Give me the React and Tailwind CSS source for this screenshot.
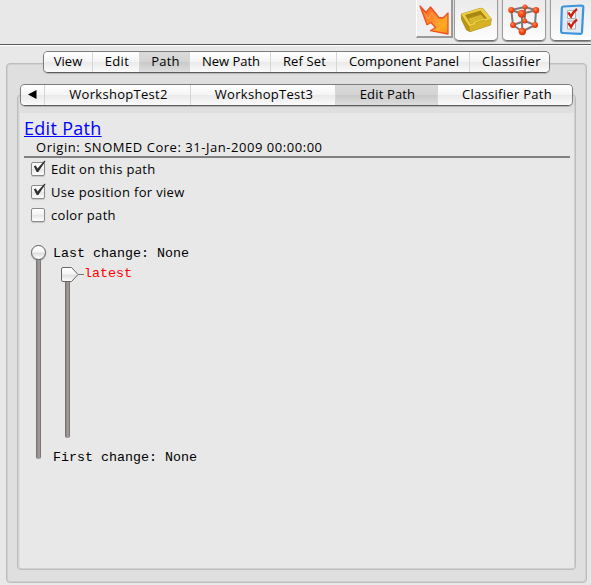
const UI = "font-['Open_Sans','Noto_Sans',sans-serif]";
const MONO = "font-['Liberation_Mono',monospace]";

function Segment({ className = '', text, active, last }) {
  return (
    <div
      className={`flex h-full items-center justify-center pb-[2px] whitespace-nowrap ${last ? '' : 'border-r border-[#d6d6d6]'} ${
        active
          ? 'bg-[linear-gradient(#dadada_0%,#d4d4d4_48%,#c9c9c9_52%,#dedede_100%)]'
          : 'bg-[linear-gradient(#ffffff_0%,#f5f5f5_48%,#eaeaea_52%,#fbfbfb_100%)]'
      } ${className}`}
    >
      {text}
    </div>
  );
}

function SegmentBar({ className, children }) {
  return (
    <div
      className={`relative flex h-[22px] overflow-hidden rounded-[5px] border border-[#7c7c7c] border-b-[#5c5c5c] text-[13px] leading-[18px] shadow-[0_1px_1px_#b4b4b4] ${className}`}
    >
      {children}
    </div>
  );
}

function Check({ label, checked }) {
  return (
    <label className="flex h-[23px] items-center">
      <span className="relative mr-[6px] -mt-[1px] h-[14px] w-[14px] rounded-[2px] border border-[#8a8a8a] bg-[linear-gradient(#fff,#f2f2f2_48%,#e6e6e6_52%,#fff)] shadow-[0_1px_1px_#c4c4c4]">
        {checked && (
          <svg className="absolute -top-[3px] -left-px h-[16px] w-[16px]" viewBox="0 0 16 16">
            <path d="M2.800 6.200 L4.800 5.500 L6.500 8.500 L13.300 .7 L14.600 .9 L7.300 12 L5.700 12 Z" fill="#303030" />
          </svg>
        )}
      </span>
      <span className="text-[13px] tracking-[0.33px] whitespace-nowrap">{label}</span>
    </label>
  );
}

function ArrowIcon() {
  return (
    <svg className="h-[37px] w-[36px] shrink-0" viewBox="0 0 36 37">
      <defs>
        <linearGradient id="arrow" x1="0" y1="0" x2="1" y2="1">
          <stop offset="0" stopColor="#ff5a28" />
          <stop offset=".45" stopColor="#ff8a28" />
          <stop offset=".75" stopColor="#ffab24" />
          <stop offset="1" stopColor="#ff8a14" />
        </linearGradient>
      </defs>
      <path d="M4 6 L10 12.500 L14.500 7 L23 17.500 L27 18 L32 13 L32 34 L14.500 30.700 L19.500 27.500 L15 22.500 L11 24.800 Z" fill="url(#arrow)" stroke="#ee5220" strokeWidth="1.300" strokeLinejoin="round" />
      <path d="M8 12 L12.500 19 L15.500 13 L24 24" fill="none" stroke="#ffc27a" strokeWidth=".8" opacity=".6" />
    </svg>
  );
}

function TrayIcon() {
  return (
    <svg className="h-[28px] w-[34px] shrink-0" viewBox="0 0 34 28">
      <path d="M2.300 8 L21 2.300 L24 2.500 L32.300 13 L31.500 19 L11 25.700 L7.500 24 L2.500 13.500 Z" fill="#b8940f" stroke="#a98716" strokeWidth=".7" strokeLinejoin="round" />
      <path d="M2.300 8 L21 2.300 L24 2.500 L32.300 13 L26.500 15 L25 13.800 L17 16.300 L16 18.500 L10.300 20.200 Z" fill="#eccf48" />
      <path d="M6 9 L21.500 4.500 L28 12.500 L26.500 13 L25 12.300 L15.500 15.300 L14.500 17 L11.500 18 Z" fill="#ab8612" />
      <path d="M9.500 12.500 L22 8.800 L25 12.300 L15.500 15.300 L14.500 17 L11.500 18 Z" fill="#d8b62c" />
      <path d="M10.500 20.500 L16 18.800 L17.200 16.700 L25 14.200 L26.500 15.500 L32 13.500 L31.500 19 L11 25.500 Z" fill="#d6b226" />
    </svg>
  );
}

const atoms = [
  [19, 4, 2.5],
  [18.7, 18, 2.5],
  [5.3, 7, 3.1],
  [30, 7.3, 3.2],
  [7, 22, 2.9],
  [29, 22, 3],
  [15.8, 10.7, 4],
  [16.3, 28.5, 3.7],
];
const bonds = [[0, 2], [0, 3], [0, 1], [1, 4], [1, 5], [2, 6], [3, 6], [2, 4], [3, 5], [4, 7], [5, 7], [6, 7]];

function MoleculeIcon() {
  return (
    <svg className="h-[34px] w-[36px] shrink-0" viewBox="0 0 36 34">
      <defs>
        <radialGradient id="atom" cx=".4" cy=".35" r=".7">
          <stop offset="0" stopColor="#ff8a5a" />
          <stop offset=".5" stopColor="#f84a18" />
          <stop offset="1" stopColor="#c83208" />
        </radialGradient>
      </defs>
      {bonds.map(([a, b]) => (
        <line key={`${a}-${b}`} x1={atoms[a][0]} y1={atoms[a][1]} x2={atoms[b][0]} y2={atoms[b][1]} stroke="#7a7a7a" strokeWidth="2" />
      ))}
      {atoms.map(([x, y, r]) => (
        <circle key={`${x}-${y}`} cx={x} cy={y} r={r} fill="url(#atom)" />
      ))}
    </svg>
  );
}

function ChecklistIcon() {
  return (
    <svg className="h-[32px] w-[26px] shrink-0" viewBox="0 0 26 32">
      <path d="M4.500 2.500 L22.500 1.500 Q24.500 1.500 24.300 3.500 L23 28 Q22.800 30 21 29.800 L4 29 Q2 29 2.100 27 L2.800 4.500 Q2.900 2.600 4.500 2.500 Z" fill="#dfeaf4" stroke="#3f93da" strokeWidth="2.200" />
      <path d="M8.500 6.500h8v8h-8zM8.500 17h8v8h-8z" fill="#fbfbfb" stroke="#a8a8a8" strokeWidth=".9" />
      <path d="M9.300 8.500 L12 12.500 Q14 8 18 5 M9.300 19 L12 23 Q14 18.500 18 15.500" fill="none" stroke="#cc2010" strokeWidth="2.300" />
    </svg>
  );
}

function Track({ className }) {
  return (
    <div
      className={`w-[5px] rounded-b-[3px] bg-[linear-gradient(90deg,#6c6664,#979290_35%,#a5a09e_65%,#6c6664)] ${className}`}
    />
  );
}

const button =
  'flex h-[41px] w-[44px] shrink-0 items-center justify-center rounded-b-[5px] border border-t-0 border-[#9c9c9c] border-b-[#6c6c6c] bg-linear-to-b from-[#ebebeb] to-[#fdfdfd] shadow-[0_1px_1px_#8a8a8a]';

export default function App() {
  return (
    <div className={`flex h-[585px] w-[591px] flex-col overflow-hidden bg-[#e8e8e8] text-black ${UI}`}>
      <header className="flex h-[46px] shrink-0 items-start border-b border-white pl-[416px] shadow-[inset_0_-1px_0_#5a5a5a]">
        <div className="flex h-[38px] w-[37px] shrink-0 items-center justify-center border-r-2 border-b-2 border-l border-[#9a9a9a] border-l-white bg-[#efefef]">
          <ArrowIcon />
        </div>
        <div className={`${button} ml-px`}><TrayIcon /></div>
        <div className={`${button} ml-[4px]`}><MoleculeIcon /></div>
        <div className={`${button} ml-[4px]`}><ChecklistIcon /></div>
      </header>

      <main className="mt-[17px] mr-[4px] ml-[6px] h-[520px] shrink-0 rounded-[4px] border border-[#bdbdbd] bg-[#dfdfdf] shadow-[inset_0_0_0_1px_#d0d0d0]">
        <SegmentBar className="-mt-[13px] ml-[36px] w-[507px]">
          <Segment text="View" className="w-[49px]" />
          <Segment text="Edit" className="w-[47px] pl-[2px] tracking-[0.3px]" />
          <Segment text="Path" className="w-[50px] pl-[2px] tracking-[0.2px]" active />
          <Segment text="New Path" className="w-[81px] pl-[2px]" />
          <Segment text="Ref Set" className="w-[66px] pl-[2px] tracking-[0.15px]" />
          <Segment text="Component Panel" className="w-[133px] pl-[2px] tracking-[0.1px]" />
          <Segment text="Classifier" className="w-[79px] pl-[4px] tracking-[0.45px]" last />
        </SegmentBar>

        <section className="mt-[21px] mr-[10px] ml-[10px] h-[476px] rounded-[4px] border border-[#bdbdbd] px-px shadow-[inset_0_0_0_1px_#d0d0d0]">
          <SegmentBar className="-mt-[11px] ml-px w-[553px]">
            <Segment className="w-[24px]" text={<svg className="h-[9px] w-[9px]" viewBox="0 0 9 9"><path d="M0 4.500 L8.500 0 V9 Z" /></svg>} />
            <Segment text="WorkshopTest2" className="w-[146px] pl-[2px] tracking-[0.3px]" />
            <Segment text="WorkshopTest3" className="w-[145px] pl-[2px] tracking-[0.3px]" />
            <Segment text="Edit Path" className="w-[102px] pl-[2px] tracking-[0.15px]" active />
            <Segment text="Classifier Path" className="w-[134px] pl-[4px] tracking-[0.3px]" last />
          </SegmentBar>
          <div className="mt-[7px] ml-px h-[455px] bg-[#e8e8e8] pl-[4px]">
            <h1 className="pt-[4px] text-[18px] leading-[22px] tracking-[0.3px] text-[#0000ff] underline">Edit Path</h1>
            <p className="ml-[12px] h-[17px] text-[13px] leading-[16px] tracking-[0.54px] whitespace-nowrap">Origin: SNOMED Core: 31-Jan-2009 00:00:00</p>
            <div className="mr-[4px] h-[2px] bg-[#808080]" />
            <div className="ml-[7px]">
              <Check label="Edit on this path" checked />
              <Check label="Use position for view" checked />
              <Check label="color path" />
            </div>

            <div className="mt-[18px] ml-[6px] flex">
              <div className="flex w-[17px] flex-col items-center">
                <div className="z-10 h-[15px] w-[15px] rounded-full border border-[#5e5e5e] bg-[linear-gradient(#fff,#f6f6f6_45%,#dedede_55%,#fff)] shadow-[0_1px_1px_#999]" />
                <Track className="-mt-px h-[200px]" />
              </div>
              <div className={`ml-[6px] flex h-[221px] flex-col pt-px text-[13.33px] leading-[16px] whitespace-pre ${MONO}`}>
                <span>Last change: None</span>
                <div className="mt-[4px] ml-[7px] flex">
                  <div className="flex w-[25px] flex-col items-start">
                    <svg className="z-10 h-[17px] w-[25px]" viewBox="0 0 25 17">
                      <defs>
                        <linearGradient id="thumb" x1="0" y1="0" x2="0" y2="1">
                          <stop offset="0" stopColor="#fff" />
                          <stop offset=".48" stopColor="#f4f4f4" />
                          <stop offset=".54" stopColor="#dfdfdf" />
                          <stop offset="1" stopColor="#fff" />
                        </linearGradient>
                      </defs>
                      <path d="M18 8.500 H24" stroke="#777" strokeWidth="1" />
                      <path d="M3 1.500 H11.500 L18 8.500 L11.500 15.500 H3 Q1.500 15.500 1.500 14 V3 Q1.500 1.500 3 1.500 Z" fill="url(#thumb)" stroke="#666" />
                    </svg>
                    <Track className="-mt-px ml-[5px] h-[156px]" />
                  </div>
                  <span className="-ml-px text-[#ff0000]">latest</span>
                </div>
                <span className="mt-auto">First change: None</span>
              </div>
            </div>
          </div>
        </section>
      </main>
    </div>
  );
}
